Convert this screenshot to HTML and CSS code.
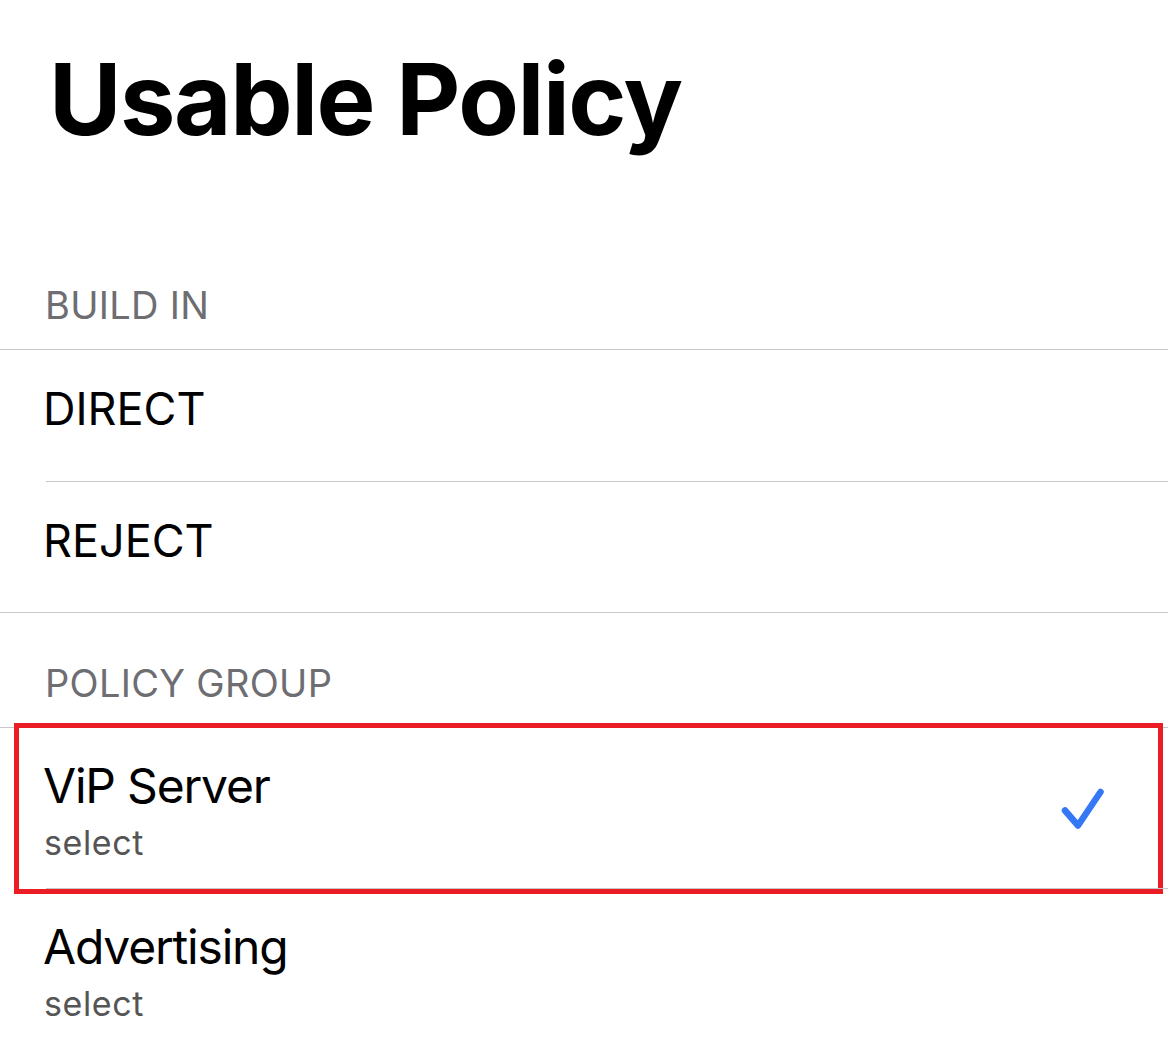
FILE: index.html
```html
<!DOCTYPE html>
<html lang="en">
<head>
<meta charset="utf-8">
<title>Usable Policy</title>
<link rel="stylesheet" href="styles.css">
</head>
<body>
<main class="page">
  <h1 class="title">Usable Policy</h1>

  <section class="section">
    <h2 class="section-header">BUILD IN</h2>
    <ul class="list">
      <li class="row row-simple"><div class="row-body"><span class="row-title">DIRECT</span></div></li>
      <li class="row row-simple"><div class="row-body"><span class="row-title">REJECT</span></div></li>
    </ul>
  </section>

  <section class="section section-group">
    <h2 class="section-header">POLICY GROUP</h2>
    <ul class="list">
      <li class="row row-detail is-selected">
        <div class="row-body">
          <div class="row-text">
            <span class="row-title">ViP Server</span>
            <span class="row-sub">select</span>
          </div>
          <svg class="check" viewBox="0 0 48 46" width="48" height="46" aria-hidden="true">
            <path d="M7 25.5 L20 40.5 L42.5 7" fill="none" stroke="#3478f6" stroke-width="6.5" stroke-linecap="round" stroke-linejoin="round"/>
          </svg>
        </div>
        <span class="highlight"></span>
      </li>
      <li class="row row-detail">
        <div class="row-body">
          <div class="row-text">
            <span class="row-title">Advertising</span>
            <span class="row-sub">select</span>
          </div>
        </div>
      </li>
    </ul>
  </section>
</main>
</body>
</html>
```

FILE: styles.css
```css
* { box-sizing: border-box; }

html, body {
  margin: 0;
  padding: 0;
  background: #ffffff;
}

body {
  font-family: Inter, "Liberation Sans", Arial, sans-serif;
  color: #000000;
  overflow: hidden;
}

.page {
  width: 1168px;
}

.title {
  margin: 0;
  padding: 50px 0 0 49px;
  font-size: 99px;
  line-height: 99px;
  font-weight: 700;
  letter-spacing: -1.4px;
}

.section {
  margin-top: 137px;
}

.section-group {
  margin-top: 51px;
}

.section-header {
  margin: 0;
  padding: 0 0 25px 45px;
  font-size: 38px;
  line-height: 38px;
  font-weight: 400;
  color: #6d6d72;
  letter-spacing: 0.3px;
}

.list {
  list-style: none;
  margin: 0;
  padding: 0;
  border-top: 1px solid #c8c7cc;
  border-bottom: 1px solid #c8c7cc;
}

.row {
  position: relative;
}

.row-body {
  margin-left: 46px;
  display: flex;
  align-items: flex-start;
  justify-content: space-between;
  padding-right: 62px;
}

.row + .row .row-body {
  border-top: 1px solid #c8c7cc;
}

.row-title {
  display: block;
  margin-left: -3px;
}

.row-simple .row-body {
  height: 131px;
  padding-top: 36px;
}

.row-simple .row-title {
  font-size: 45px;
  line-height: 45px;
}

.row-detail .row-body {
  height: 160px;
}

.row + .row.row-detail .row-body {
  height: 161px;
}

.row-text {
  display: flex;
  flex-direction: column;
  gap: 16px;
  padding-top: 34px;
}

.row-detail .row-title {
  font-size: 48px;
  line-height: 48px;
  letter-spacing: -1.2px;
}

.row-sub {
  display: block;
  margin-left: -2px;
  font-size: 34px;
  line-height: 34px;
  letter-spacing: 0.6px;
  color: #555555;
}

.check {
  display: block;
  flex: none;
  align-self: center;
}

.highlight {
  position: absolute;
  left: 14px;
  top: -5px;
  width: 1149px;
  height: 171px;
  border: 5px solid #ec1c24;
  pointer-events: none;
}
```
